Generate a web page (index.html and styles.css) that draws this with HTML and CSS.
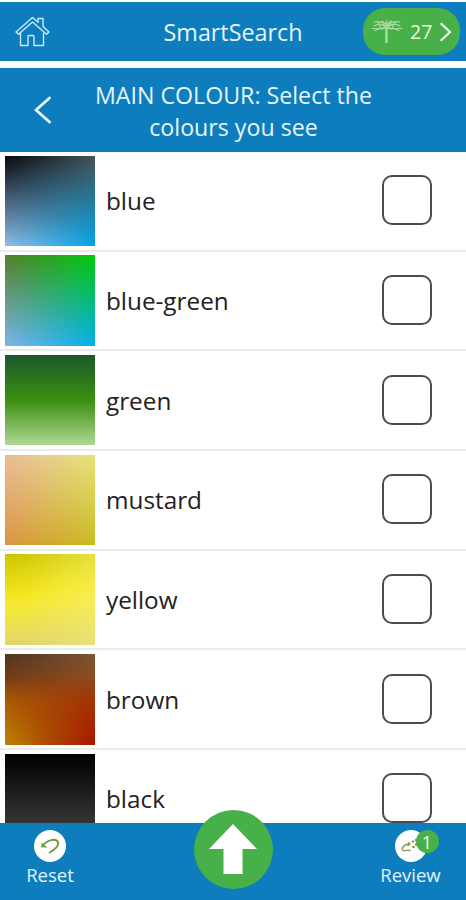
FILE: index.html
```html
<!DOCTYPE html>
<html lang="en">
<head>
<meta charset="utf-8">
<title>SmartSearch</title>
<link rel="stylesheet" href="styles.css">
</head>
<body>
<div class="app">
  <header class="topbar">
    <svg class="home" width="36" height="32" viewBox="0 0 36 32"><path d="M5.500 17.500V29.500H13V20.500Q13 19.500 14 19.500H18Q19 19.500 19 20.500V29.500H28.500V17.500M1 16 17.500 1.500 23 6.200V2.500H28V10.500L34 16 31.500 18.300 17.500 6 3.500 18.300Z"/></svg>
    <h1>SmartSearch</h1>
    <div class="count">
      <svg class="tree" width="32" height="25" viewBox="0 0 32 25"><path class="trunk" d="M15.500 8V23"/><path d="M15.500 6C12 3 8 2 3 3M16 6C20 3 24 2 29 3M15 7C10 4 6 5 3 7M16 7C22 4 26 5 29 7M1 9.500H31M4 11.500Q10 8 15.500 9 21 8 28 11.500M15.500 1V12M11 2 20 10M20 2 11 10M7 3 10 10M24 3 21 10M12 4H20M11 6.500H21"/></svg>
      <span>27</span>
      <svg class="next" width="12" height="20" viewBox="0 0 12 20"><path d="M1.500 2 10 10 1.500 18"/></svg>
    </div>
  </header>
  <div class="question">
    <svg class="back" width="18" height="28" viewBox="0 0 18 28"><path d="M15.500 2 2 14 15.500 26"/></svg>
    <h2>MAIN COLOUR: Select the<br>colours you see</h2>
  </div>
  <main class="list">
    <label class="row"><span class="swatch blue"></span><span class="name">blue</span><span class="box"></span></label>
    <label class="row"><span class="swatch blue-green"></span><span class="name">blue-green</span><span class="box"></span></label>
    <label class="row"><span class="swatch green"></span><span class="name">green</span><span class="box"></span></label>
    <label class="row"><span class="swatch mustard"></span><span class="name">mustard</span><span class="box"></span></label>
    <label class="row"><span class="swatch yellow"></span><span class="name">yellow</span><span class="box"></span></label>
    <label class="row"><span class="swatch brown"></span><span class="name">brown</span><span class="box"></span></label>
    <label class="row"><span class="swatch black"></span><span class="name">black</span><span class="box"></span></label>
  </main>
  <footer class="bottombar">
    <div class="action">
      <span class="disc"><svg width="32" height="32" viewBox="0 0 32 32"><path class="undo" d="M8 16.500C13 9.500 22 8 24 12 25.500 15 21 20 15.500 22.500"/><path class="tip" d="M7.500 12.500V17L13.500 17.700Z"/></svg></span>
      <span>Reset</span>
    </div>
    <div class="up"><svg width="50" height="52" viewBox="0 0 50 52"><path d="M25 1 49 26H34.500V51H15.500V26H1Z"/></svg></div>
    <div class="action review">
      <span class="disc"><svg width="32" height="32" viewBox="0 0 32 32"><path class="foot" d="M14.500 14C10 14 6.500 17 7.500 20 8.500 22 11 19.500 15 20.500M13.500 12.500 15 14 13 15.500"/><path class="dots" d="M17.500 11.500H18.500M21 9.500V10.500M18 17H19M21 14V15"/></svg><b>1</b></span>
      <span>Review</span>
    </div>
  </footer>
</div>
</body>
</html>
```
FILE: styles.css
```css
* { box-sizing: border-box; }
body { margin: 0; background: #fff; font-family: "Open Sans", sans-serif; }
svg { display: block; fill: none; stroke-linecap: round; stroke-linejoin: round; }
h1, h2 { margin: 0; font-weight: 400; color: #e6f5fc; }
.app { height: 900px; padding-top: 2px; display: flex; flex-direction: column; overflow: hidden; }
.topbar { height: 59px; flex: none; display: grid; grid-template-columns: 1fr auto 1fr; align-items: center; background: #0d7dbd; }
.home { margin: 0 0 0 15px; stroke: #c9ecf8; stroke-width: 1.4; }
h1 { font-size: 23.3px; line-height: 32px; }
.count { justify-self: end; width: 97px; height: 47px; margin-right: 6px; padding-left: 8px; border-radius: 22px; background: #48b048; display: flex; align-items: center; color: #e9f8df; font-size: 19.5px; }
.tree { stroke: #a9da9d; stroke-width: 1.2; }
.trunk { stroke-width: 2.5; }
.count span { margin-left: 7px; }
.next { margin-left: 8px; stroke: #eefbe8; stroke-width: 2.4; }
.question { height: 84px; flex: none; margin-top: 7px; display: grid; grid-template-columns: 94px 279px 1fr; align-items: center; background: #0d7dbd; }
.back { margin-left: 34px; stroke: #f2fbff; stroke-width: 2.8; }
h2 { font-size: 23.2px; line-height: 32px; padding-top: 1px; text-align: center; white-space: nowrap; }
.list { flex: 1; min-height: 0; overflow: hidden; }
.row { height: 99.7px; display: flex; align-items: center; padding: 0 34px 0 4.5px; border-bottom: 2px solid #e9ebec; }
.swatch { position: relative; width: 90.5px; height: 90.5px; }
.swatch::after { content: ""; position: absolute; inset: 0; mask-image: linear-gradient(transparent, #000); }
.blue { background: linear-gradient(90deg, #06080c, #465259); }
.blue::after { background: linear-gradient(90deg, #92bde9, #00a6e5); }
.blue-green { background: linear-gradient(90deg, #567d2b, #00cb08); }
.blue-green::after { background: linear-gradient(90deg, #80b5e6, #00afed); }
.green { background: linear-gradient(#1d572d, #399010 50%, #b0d795); }
.mustard { background: linear-gradient(90deg, #e9bd99, #e6e47b); }
.mustard::after { background: linear-gradient(90deg, #dc9343, #c8bb21); }
.yellow { background: linear-gradient(90deg, transparent 20%, rgba(250,242,120,.45)), linear-gradient(172deg, #cbc600, #f5e620 42%, #f5e83a 55%, #d9d278); }
.brown { background: linear-gradient(transparent, #a04408 55%), linear-gradient(90deg, #4b3521, #7d5436); }
.brown::after { background: linear-gradient(90deg, #bd8600, #ac4200 55%, #a91600); mask-image: linear-gradient(transparent 25%, #000); }
.black { background: linear-gradient(#000, #454545); }
.name { flex: 1; margin-left: 11px; padding-top: 1px; font-size: 24.3px; line-height: 32px; color: #222; }
.box { width: 50px; height: 50px; margin-bottom: 1px; border: 2px solid #4b4b4b; border-radius: 10px; }
.bottombar { height: 77px; flex: none; display: flex; align-items: flex-start; justify-content: space-between; background: #0d7dbd; color: #e1f4fc; font-size: 18.5px; line-height: 24px; }
.action { width: 100px; display: flex; flex-direction: column; align-items: center; padding-top: 7px; gap: 1px; }
.review { width: 111px; }
.disc { position: relative; width: 32px; height: 32px; border-radius: 50%; background: #fff; }
.undo { stroke: #709b40; stroke-width: 1.8; }
.tip { fill: #709b40; }
.foot, .dots { stroke: #8a9a50; stroke-width: 1.4; }
.dots { stroke-width: 2; }
.disc b { position: absolute; left: 21px; top: 0; width: 23px; height: 23px; border-radius: 50%; background: #48b048; color: #effbe9; font-weight: 400; font-size: 18px; line-height: 24px; text-align: center; }
.up { width: 79px; height: 79px; margin: -13.500px 0 0 11px; flex: none; display: flex; align-items: center; justify-content: center; border-radius: 50%; background: #48b048; position: relative; }
.up path { fill: #fff; }
```
